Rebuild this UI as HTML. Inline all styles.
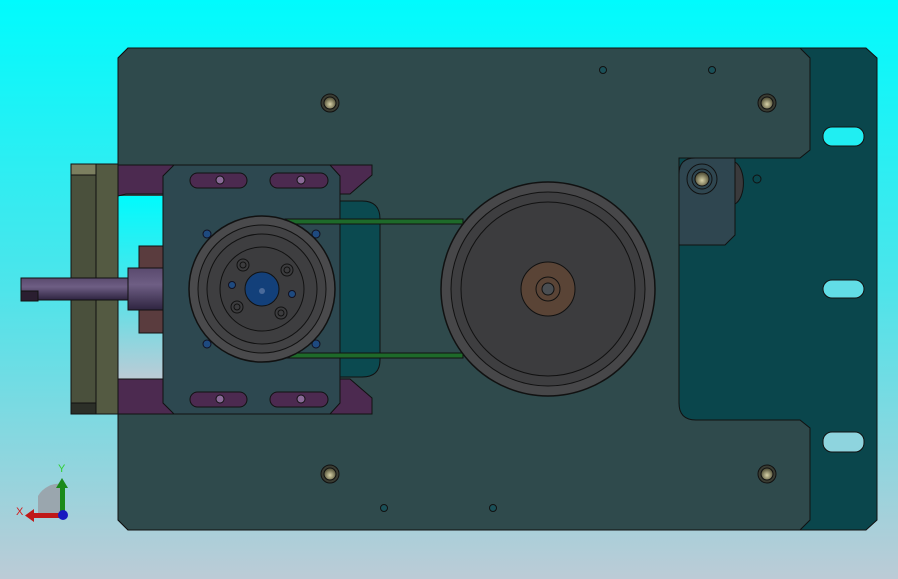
<!DOCTYPE html>
<html><head><meta charset="utf-8"><style>
html,body{margin:0;padding:0;width:898px;height:579px;overflow:hidden;}
</style></head><body>
<svg width="898" height="579" viewBox="0 0 898 579" xmlns="http://www.w3.org/2000/svg">
<defs>
<linearGradient id="bg" x1="0" y1="0" x2="0" y2="1">
<stop offset="0" stop-color="#00fbfd"/><stop offset="0.5" stop-color="#4ee4ea"/><stop offset="1" stop-color="#bccbd6"/>
</linearGradient>
<radialGradient id="scr" cx="0.5" cy="0.6" r="0.5"><stop offset="0" stop-color="#d8d2a8"/><stop offset="1" stop-color="#5c5a40"/></radialGradient>
<linearGradient id="shaft" x1="0" y1="0" x2="0" y2="1"><stop offset="0" stop-color="#5a4a6e"/><stop offset="0.4" stop-color="#6e5e84"/><stop offset="1" stop-color="#2e2440"/></linearGradient>
</defs>
<rect width="898" height="579" fill="url(#bg)"/>
<!-- back plate -->
<path d="M118,58 L128,48 L866,48 L877,58 L877,520 L866,530 L128,530 L118,520 Z" fill="#0a464c" stroke="#111" stroke-width="1"/>
<!-- slots -->
<rect x="823" y="127" width="41" height="19" rx="9" fill="#20eef2" stroke="#111"/>
<rect x="823" y="280" width="41" height="18" rx="9" fill="#62dde6" stroke="#111"/>
<rect x="823" y="432" width="41" height="20" rx="9" fill="#8ed4de" stroke="#111"/>
<!-- front plate -->
<path d="M118,58 L128,48 L800,48 L810,58 L810,150 L800,158 L679,158 L679,403 Q679,420 696,420 L800,420 L810,428 L810,520 L800,530 L128,530 L118,520 Z" fill="#2f4a4c" stroke="#111"/>
<!-- bracket right -->
<path d="M735,162 A12,22 0 0 1 735,204 Z" fill="#3a3a3c" stroke="#111"/>
<path d="M695,158 L735,158 L735,235 L725,245 L679,245 L679,174 Q679,158 695,158 Z" fill="#2f4650" stroke="#111"/>
<circle cx="702" cy="179" r="15" fill="none" stroke="#111"/>
<circle cx="702" cy="179" r="10" fill="none" stroke="#111"/>
<circle cx="702" cy="179" r="7" fill="url(#scr)" stroke="#111"/>
<circle cx="757" cy="179" r="4" fill="none" stroke="#111"/>
<!-- screws -->
<g stroke="#111">
<circle cx="330" cy="103" r="9" fill="#3a3c32"/><circle cx="330" cy="103" r="6" fill="url(#scr)"/>
<circle cx="767" cy="103" r="9" fill="#3a3c32"/><circle cx="767" cy="103" r="6" fill="url(#scr)"/>
<circle cx="330" cy="474" r="9" fill="#3a3c32"/><circle cx="330" cy="474" r="6" fill="url(#scr)"/>
<circle cx="767" cy="474" r="9" fill="#3a3c32"/><circle cx="767" cy="474" r="6" fill="url(#scr)"/>
</g>
<g fill="#1a5058" stroke="#111">
<circle cx="603" cy="70" r="3.5"/><circle cx="712" cy="70" r="3.5"/><circle cx="384" cy="508" r="3.5"/><circle cx="493" cy="508" r="3.5"/>
</g>
<!-- left cutout showing bg -->
<rect x="118" y="196" width="45" height="183" fill="url(#bg)"/>
<!-- motor body teal -->
<path d="M338,201 L362,201 Q380,201 380,219 L380,360 Q380,377 362,377 L338,377 Z" fill="#0b4a50" stroke="#111"/>
<!-- olive plate -->
<rect x="71" y="164" width="47" height="250" fill="#545a42" stroke="#111"/>
<rect x="71" y="164" width="25" height="250" fill="#4a503c" stroke="#111"/>
<rect x="71" y="164" width="25" height="11" fill="#7c7f60" stroke="#111"/>
<rect x="71" y="403" width="25" height="11" fill="#2c2f28" stroke="#111"/>
<!-- shaft -->
<rect x="21" y="278" width="120" height="22" fill="url(#shaft)" stroke="#111"/>
<rect x="21" y="291" width="17" height="10" fill="#2a1e30" stroke="#111"/>
<rect x="139" y="246" width="24" height="87" fill="#5a3c3e" stroke="#111"/>
<rect x="128" y="268" width="46" height="42" fill="url(#shaft)" stroke="#111"/>
<!-- purple brackets -->
<path d="M118,165 L372,165 L372,175 L350,194 L126,194 L118,196 Z" fill="#4c2a50" stroke="#111"/>
<path d="M118,379 L126,379 L350,379 L372,398 L372,414 L118,414 Z" fill="#4c2a50" stroke="#111"/>
<!-- motor plate -->
<path d="M174,165 L330,165 L340,176 L340,403 L330,414 L174,414 L163,403 L163,176 Z" fill="#2d4850" stroke="#111"/>
<g fill="#4c2a50" stroke="#111">
<rect x="190" y="173" width="57" height="15" rx="7.5"/><rect x="270" y="173" width="58" height="15" rx="7.5"/>
<rect x="190" y="392" width="57" height="15" rx="7.5"/><rect x="270" y="392" width="58" height="15" rx="7.5"/>
</g>
<g fill="#8a6a98" stroke="#111"><circle cx="220" cy="180" r="4"/><circle cx="301" cy="180" r="4"/><circle cx="220" cy="399" r="4"/><circle cx="301" cy="399" r="4"/></g>
<!-- belt -->
<g stroke="#111" fill="#1e6a2a">
<rect x="285" y="219" width="178" height="5"/>
<rect x="285" y="353" width="178" height="5"/>
</g>
<!-- mounting holes -->
<g fill="#1e4a80" stroke="#112"><circle cx="207" cy="234" r="4"/><circle cx="316" cy="234" r="4"/><circle cx="207" cy="344" r="4"/><circle cx="316" cy="344" r="4"/></g>
<!-- small pulley -->
<circle cx="262" cy="289" r="73" fill="#4a4a4c" stroke="#111" stroke-width="1.5"/>
<circle cx="262" cy="289" r="64" fill="#424244" stroke="#111"/>
<circle cx="262" cy="289" r="55" fill="#3e3e40" stroke="#111"/>
<circle cx="262" cy="289" r="42" fill="#3c3c3e" stroke="#111"/>
<g fill="none" stroke="#111"><circle cx="243" cy="265" r="6"/><circle cx="243" cy="265" r="3"/><circle cx="287" cy="270" r="6"/><circle cx="287" cy="270" r="3"/><circle cx="237" cy="307" r="6"/><circle cx="237" cy="307" r="3"/><circle cx="281" cy="313" r="6"/><circle cx="281" cy="313" r="3"/></g>
<g fill="#1e4a80" stroke="#112"><circle cx="232" cy="285" r="3.5"/><circle cx="292" cy="294" r="3.5"/></g>
<circle cx="262" cy="289" r="17" fill="#13407a" stroke="#111"/>
<circle cx="262" cy="291" r="3" fill="#4a6a9a"/>
<!-- big pulley -->
<circle cx="548" cy="289" r="107" fill="#474749" stroke="#111" stroke-width="1.5"/>
<circle cx="548" cy="289" r="97" fill="#3e3e40" stroke="#111"/>
<circle cx="548" cy="289" r="87" fill="#3c3c3e" stroke="#111"/>
<circle cx="548" cy="289" r="27" fill="#5a4436" stroke="#111"/>
<circle cx="548" cy="289" r="12" fill="none" stroke="#111"/>
<circle cx="548" cy="289" r="6" fill="#4a4e52" stroke="#111"/>
<!-- triad -->
<path d="M38,516 L38,496 A24,24 0 0 1 62,484 L62,516 Z" fill="#9aa6ae"/>
<rect x="60" y="486" width="5" height="28" fill="#1a8a1a"/>
<path d="M56,488 L62,478 L68,488 Z" fill="#1a8a1a"/>
<rect x="32" y="513" width="30" height="5" fill="#c01818"/>
<path d="M34,509 L25,515.5 L34,522 Z" fill="#c01818"/>
<circle cx="63" cy="515" r="5" fill="#1818c0"/>
<text x="58" y="472" font-family="Liberation Sans, sans-serif" font-size="11" fill="#30d030">Y</text>
<text x="16" y="515" font-family="Liberation Sans, sans-serif" font-size="11" fill="#d02020">X</text>
</svg>
</body></html>
